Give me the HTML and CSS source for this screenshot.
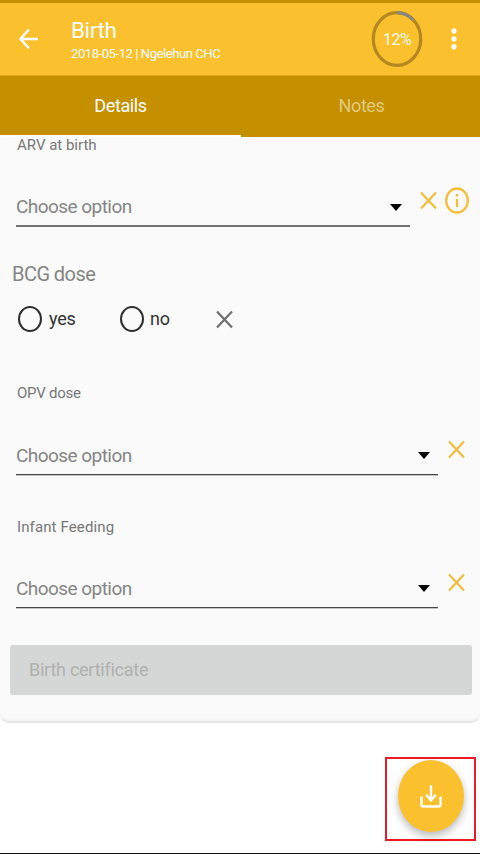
FILE: index.html
```html
<!DOCTYPE html>
<html lang="en">
<head>
<meta charset="utf-8">
<title>Birth</title>
<link rel="stylesheet" href="styles.css">
</head>
<body>
<header class="bar">
  <svg class="back" width="20" height="22" viewBox="0 0 20 22"><path d="M10 1.5 1.5 11 10 20.5M1.5 11H19"/></svg>
  <div class="heading">
    <h1 class="title"><span>Birth</span></h1>
    <p class="subtitle"><span>2018-05-12 | Ngelehun CHC</span></p>
  </div>
  <div class="progress">
    <svg width="52" height="58" viewBox="0 0 52 58"><ellipse cx="26" cy="29" rx="23.7" ry="26.3"/><path d="M26 2.7A23.7 26.3 0 0 1 42.3 10"/></svg>
    <span class="percent">12%</span>
  </div>
  <svg class="more" width="6" height="22" viewBox="0 0 6 22"><ellipse cx="3" cy="3" rx="2.6" ry="2.8"/><ellipse cx="3" cy="11" rx="2.6" ry="2.8"/><ellipse cx="3" cy="18.8" rx="2.6" ry="2.8"/></svg>
</header>
<nav class="tabs">
  <div class="tab active"><span>Details</span></div>
  <div class="tab"><span>Notes</span></div>
</nav>
<main class="card">
  <section class="field">
    <div class="label">ARV at birth</div>
    <div class="row">
      <div class="select soft"><span>Choose option</span><i class="caret"></i></div>
      <svg class="clear" width="17" height="19" viewBox="0 0 17 19"><path d="m1 1.5 15 16M16 1.5l-15 16"/></svg>
      <svg class="info" width="24" height="27" viewBox="0 0 24 27"><ellipse cx="12" cy="13.5" rx="10.8" ry="12"/><path d="M12 12v8M12 7v2.6"/></svg>
    </div>
  </section>
  <section class="choice">
    <div class="question"><span>BCG dose</span></div>
    <div class="options">
      <label class="option"><i class="radio"></i><span>yes</span></label>
      <label class="option"><i class="radio"></i><span>no</span></label>
      <svg class="reset" width="17" height="19" viewBox="0 0 17 19"><path d="m1 1.5 15 16M16 1.5l-15 16"/></svg>
    </div>
  </section>
  <section class="field opv">
    <div class="label opv-label">OPV dose</div>
    <div class="row">
      <div class="select"><span>Choose option</span><i class="caret"></i></div>
      <svg class="clear" width="17" height="19" viewBox="0 0 17 19"><path d="m1 1.5 15 16M16 1.5l-15 16"/></svg>
    </div>
  </section>
  <section class="field feeding">
    <div class="label feeding-label">Infant Feeding</div>
    <div class="row">
      <div class="select"><span>Choose option</span><i class="caret"></i></div>
      <svg class="clear" width="17" height="19" viewBox="0 0 17 19"><path d="m1 1.5 15 16M16 1.5l-15 16"/></svg>
    </div>
  </section>
  <div class="certificate"><span>Birth certificate</span></div>
</main>
<footer class="actions">
  <div class="highlight">
    <div class="fab">
      <svg width="22" height="24" viewBox="0 0 22 24"><path d="M1.5 12.5v8.2q0 1.8 1.8 1.8h15.4q1.8 0 1.8-1.8v-8.2M11 1v15M6.2 10.8 11 16.3l4.8-5.5"/></svg>
    </div>
  </div>
</footer>
</body>
</html>
```
FILE: styles.css
```css
* { box-sizing: border-box; }
body {
  margin: 0;
  height: 854px;
  display: flex;
  flex-direction: column;
  overflow: hidden;
  background: #fff;
  border-bottom: 1px solid #111;
  font-family: Roboto, "Liberation Sans", sans-serif;
}
svg { display: block; flex: none; fill: none; overflow: visible; }
.bar {
  height: 76px;
  flex: none;
  display: flex;
  align-items: center;
  padding: 0 23px 0 19px;
  border-top: 3px solid #c49000;
  border-bottom: 1px solid #dca51a;
  background: #fbc02d;
  color: #fff;
}
.back { stroke: #fff; stroke-width: 2.5; }
.heading { margin: 3px 0 0 32px; flex: 1; }
.title, .subtitle { margin: 0; font-weight: 400; white-space: nowrap; }
.title { font-size: 22.5px; line-height: 25px; letter-spacing: -.4px; }
.subtitle { font-size: 13px; line-height: 21px; letter-spacing: -.42px; }
.progress { display: grid; place-items: center; margin-right: 28px; }
.progress > * { grid-area: 1 / 1; }
.progress svg { stroke: #b38820; stroke-width: 3.2; }
.progress path { stroke: #8b8580; }
.percent { font-size: 16px; letter-spacing: -.5px; color: #fffbe8; }
.more { fill: #fff; }
.tabs { display: flex; height: 61px; flex: none; background: #c49000; }
.tab {
  flex: 1;
  display: flex;
  align-items: center;
  justify-content: center;
  padding-left: 2px;
  border-bottom: 2px solid transparent;
  font-size: 18px;
  letter-spacing: -.4px;
  color: #e3c97f;
}
.active { flex: 0 0 241px; padding-left: 0; border-color: #fff; color: #fff; letter-spacing: -.4px; }
.card {
  height: 586px;
  flex: none;
  background: #fafafa;
  border-radius: 0 0 9px 9px;
  box-shadow: inset 0 -4px 3px -2px #e2e2e2;
}
.label { height: 16px; line-height: 16px; padding-left: 17px; font-size: 15px; color: #777; }
.opv-label { letter-spacing: -.25px; }
.feeding-label { letter-spacing: .12px; line-height: 18px; }
.row { display: flex; align-items: center; margin-top: 36px; padding: 0 15px 0 16px; height: 38px; }
.select {
  flex: 1;
  height: 38px;
  display: flex;
  align-items: center;
  justify-content: space-between;
  padding-right: 8px;
  border-bottom: 1px solid #454545;
  box-shadow: 0 1px #c4c4c4;
  font-size: 19px;
  letter-spacing: -.55px;
  color: #858585;
}
.select span { margin-top: -1px; }
.soft { border-bottom: 2px solid #737373; box-shadow: none; }
.caret { border: 6px solid transparent; border-top: 7px solid #000; border-bottom: 0; }
.clear { margin: -13px 0 0 10px; stroke: #f4bd3a; stroke-width: 2.2; }
.info { margin: -15px -4px 0 8px; stroke: #f4bd3a; stroke-width: 2.3; }
.soft + .clear { margin-top: -15px; }
.choice { padding: 35px 0 0 12px; }
.question { height: 24px; line-height: 25px; font-size: 20px; letter-spacing: -.55px; color: #858585; }
.options { display: flex; align-items: center; height: 28px; margin-top: 19px; padding-left: 6px; }
.option { display: flex; align-items: center; width: 101px; font-size: 18px; letter-spacing: -.2px; color: #333; }
.option span { margin-top: -2px; }
.radio { width: 24px; height: 26px; margin-right: 7px; border: 2.5px solid #2f2f2f; border-radius: 50%; }
.option + .option .radio { margin-left: 1px; margin-right: 6px; }
.reset { margin-left: -4px; stroke: #707070; stroke-width: 2.2; }
.opv { padding-top: 52px; }
.feeding { padding-top: 43px; }
.certificate {
  height: 50px;
  margin: 37px 8px 0 10px;
  padding-left: 19px;
  border-radius: 3px;
  background: #d5d7d6;
  color: #b0b0b0;
  font-size: 18px;
  letter-spacing: -.25px;
  line-height: 49px;
}
.actions { display: flex; justify-content: flex-end; padding: 34px 4px 0 0; }
.highlight {
  width: 91px;
  height: 84px;
  padding: 1px 0 0 10.5px;
  border: 2px solid #ed1c24;
}
.fab {
  width: 66px;
  height: 72px;
  display: grid;
  place-items: center;
  border-radius: 50%;
  background: #fbc02d;
  box-shadow: 0 4px 8px rgba(0, 0, 0, .28);
}
.fab svg { stroke: #fff; stroke-width: 2.4; }
```
